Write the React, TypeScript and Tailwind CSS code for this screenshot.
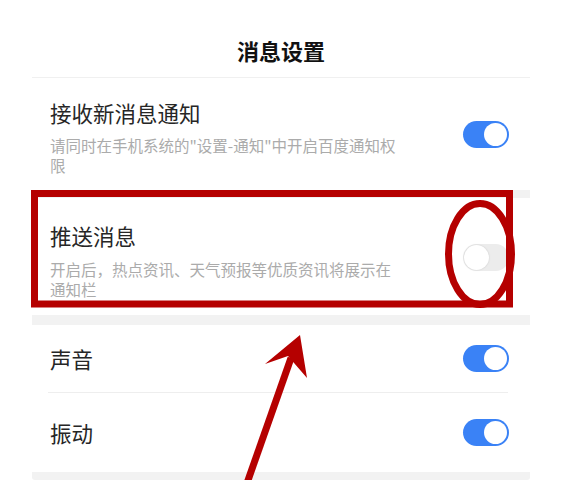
import React from "react";

function Toggle({ on }: { on: boolean }) {
  return on ? (
    <div className="relative w-[46px] h-[27px] rounded-full bg-[#3a82f6] shrink-0">
      <div className="absolute right-[2px] top-[2px] w-[23px] h-[23px] rounded-full bg-white" />
    </div>
  ) : (
    <div className="relative w-[46px] h-[27px] rounded-full bg-[#ececec] shrink-0">
      <div className="absolute left-[1px] top-[1px] w-[25px] h-[25px] rounded-full bg-white shadow-[0_0_2px_rgba(0,0,0,0.15)]" />
    </div>
  );
}

export default function App() {
  return (
    <div className="relative w-[565px] h-[480px] overflow-hidden bg-white font-['Noto_Sans_CJK_SC','Noto_Sans',sans-serif]">
      <div className="ml-[32px] w-[498px]">
        <div className="h-[78px] border-b border-[#f0f0f0] pt-[39px] text-center">
          <div className="text-[22px] leading-[22px] font-bold text-[#111]">消息设置</div>
        </div>

        <div className="h-[112px] flex justify-between pl-[18px] pr-[21px]">
          <div className="pt-[21px]">
            <div className="text-[21.5px] leading-[28px] text-[#262626]">接收新消息通知</div>
            <div className="mt-[8px] w-[352px] text-[15.5px] leading-[20px] text-[#ababab]">
              请同时在手机系统的"设置-通知"中开启百度通知权限
            </div>
          </div>
          <div className="self-center">
            <Toggle on />
          </div>
        </div>

        <div className="h-[8px] bg-[#f2f2f2]" />

        <div className="h-[117px] flex justify-between pl-[18px] pr-[21px]">
          <div className="pt-[24px]">
            <div className="text-[21.5px] leading-[28px] text-[#262626]">推送消息</div>
            <div className="mt-[9px] w-[352px] text-[15.5px] leading-[20px] text-[#ababab]">
              开启后，热点资讯、天气预报等优质资讯将展示在通知栏
            </div>
          </div>
          <div className="self-center mt-[2px]">
            <Toggle on={false} />
          </div>
        </div>

        <div className="h-[10px] bg-[#f2f2f2]" />

        <div className="h-[67px] flex items-center justify-between pl-[18px] pr-[21px]">
          <div className="text-[21.5px] leading-[28px] text-[#262626]">声音</div>
          <Toggle on />
        </div>

        <div className="ml-[16px] mr-[22px] h-[1px] bg-[#eeeeee]" />

        <div className="h-[79px] flex items-center justify-between pl-[18px] pr-[21px]">
          <div className="text-[21.5px] leading-[28px] text-[#262626]">振动</div>
          <Toggle on />
        </div>

        <div className="h-[8px] bg-[#f2f2f2] rounded-b-[3px]" />
      </div>

      <svg className="absolute inset-0 pointer-events-none" width="565" height="480" viewBox="0 0 565 480">
        <rect x="34.5" y="193.5" width="475" height="110.5" fill="none" stroke="#b50000" strokeWidth="7" />
        <ellipse cx="480" cy="254" rx="31.5" ry="50.5" fill="none" stroke="#b50000" strokeWidth="7" />
        <line x1="246" y1="486" x2="291" y2="358" stroke="#b50000" strokeWidth="7" />
        <polygon points="300,335 265,364 288,356 307,378" fill="#b50000" />
      </svg>
    </div>
  );
}
